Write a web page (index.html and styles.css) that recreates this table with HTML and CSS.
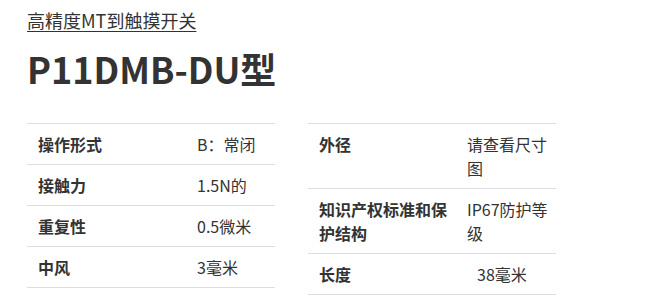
FILE: index.html
```html
<!DOCTYPE html>
<html lang="zh">
<head>
<meta charset="utf-8">
<link rel="stylesheet" href="styles.css">
</head>
<body>
<div class="page">
  <a class="crumb" href="#">高精度MT到触摸开关</a>
  <h1 class="title">P11DMB-DU型</h1>
  <div class="specs">
    <table class="spec spec-left">
      <tr><th>操作形式</th><td>B：常闭</td></tr>
      <tr><th>接触力</th><td>1.5N的</td></tr>
      <tr><th>重复性</th><td>0.5微米</td></tr>
      <tr><th>中风</th><td>3毫米</td></tr>
    </table>
    <table class="spec spec-right">
      <tr><th>外径</th><td>请查看尺寸图</td></tr>
      <tr><th>知识产权标准和保护结构</th><td>IP67防护等级</td></tr>
      <tr><th>长度</th><td class="indent">38毫米</td></tr>
    </table>
  </div>
</div>
</body>
</html>
```
FILE: styles.css
```css
html, body {
  margin: 0;
  padding: 0;
  background: #fff;
}
body {
  font-family: "Noto Sans CJK SC", "Noto Sans", sans-serif;
  color: #333;
}
.page {
  padding: 7px 0 0 27px;
}
.crumb {
  display: inline-block;
  font-size: 18px;
  line-height: 26px;
  color: #333;
  text-decoration: underline;
  text-decoration-color: #1d3557;
  text-underline-offset: 3px;
}
.title {
  margin: 13px 0 0 0;
  font-size: 36px;
  line-height: 44px;
  font-weight: 700;
  color: #333;
}
.specs {
  display: flex;
  gap: 33px;
  margin-top: 33px;
  align-items: flex-start;
}
.spec {
  width: 248px;
  border-collapse: collapse;
  table-layout: fixed;
  font-size: 16px;
  line-height: 24px;
}
.spec tr {
  border-top: 1px solid #ddd;
  border-bottom: 1px solid #ddd;
}
.spec th, .spec td {
  padding: 8px 8px 8px 11px;
  vertical-align: top;
  text-align: left;
}
.spec th {
  font-weight: 700;
}
.spec td {
  font-weight: 400;
}
.spec-left th { width: 140px; }
.spec-right th { width: 129px; }
.spec-right td { padding-right: 4px; }
.spec td.indent { padding-left: 21px; }
```
